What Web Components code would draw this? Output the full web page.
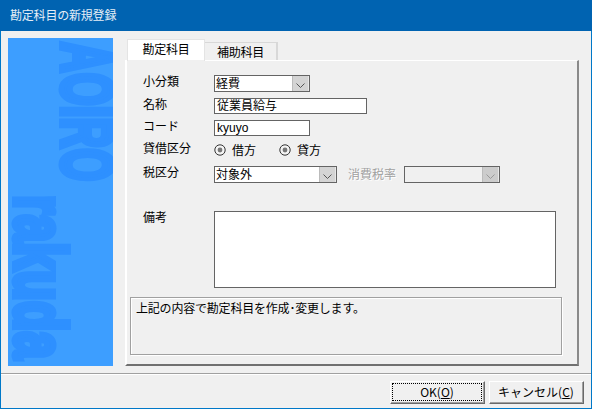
<!DOCTYPE html>
<html lang="ja">
<head>
<meta charset="utf-8">
<title>勘定科目の新規登録</title>
<style>
    html, body { margin: 0; padding: 0; background: #f0f0f0; }
    body { font: 12px/16px "Noto Sans CJK JP", sans-serif; color: #000; }
</style>
</head>
<body>
<app-window heading="勘定科目の新規登録">
    <side-banner slot="side"></side-banner>
    <tab-panel slot="main">
        <form-row label="小分類" style="margin-top:14px">
            <combo-box value="経費" style="width:96px"></combo-box>
        </form-row>
        <form-row label="名称" style="margin-top:6px">
            <text-box value="従業員給与" style="width:153px"></text-box>
        </form-row>
        <form-row label="コード" style="margin-top:6px">
            <text-box value="kyuyo" style="width:96px"></text-box>
        </form-row>
        <form-row label="貸借区分" style="margin-top:6px">
            <radio-opt label="借方" style="width:65px"></radio-opt>
            <radio-opt label="貸方"></radio-opt>
        </form-row>
        <form-row label="税区分" style="margin-top:9px">
            <combo-box value="対象外" style="width:123px"></combo-box>
            <span style="margin:0 8px 0 11px;color:#a0a0a0;text-shadow:1px 1px 0 #fff;line-height:14px;padding-bottom:2px">消費税率</span>
            <combo-box disabled style="width:96px"></combo-box>
        </form-row>
        <form-row label="備考" style="margin-top:28px">
            <text-box multiline style="width:342px;height:77px"></text-box>
        </form-row>
        <group-note style="margin:9px 0 0 0">上記の内容で勘定科目を作成･変更します。</group-note>
    </tab-panel>
    <push-button slot="actions" focused style="width:95px"><span>OK(<u>O</u>)</span></push-button>
    <push-button slot="actions" style="width:95px"><span>キャンセル(<u>C</u>)</span></push-button>
</app-window>

<script>
// ---- window frame: title bar, body, button bar ----
class AppWindow extends HTMLElement {
    constructor() {
        super();
        this.attachShadow({ mode: 'open' });
    }
    connectedCallback() {
        this.shadowRoot.innerHTML = `
            <style>
                :host { display: flex; flex-direction: column; width: 592px; height: 409px; box-sizing: border-box; border: 1px solid #0078c8; border-top: 0; background: #f0f0f0; }
                .title { height: 31px; margin: 0 -1px; padding-left: 10px; background: #0063b1; color: #e6eef6; line-height: 30px; flex: none; letter-spacing: -.2px; }
                .body { flex: 1; display: flex; padding: 7px 0 0 7px; gap: 12px; min-height: 0; }
                .bar { flex: none; height: 35px; border-top: 1px solid #a0a0a0; box-shadow: inset 0 1px 0 #fff; display: flex; justify-content: flex-end; gap: 4px; padding: 7px 7px 0 0; box-sizing: border-box; }
            </style>
            <div class="title">${this.getAttribute('heading')}</div>
            <div class="body"><slot name="side"></slot><slot name="main"></slot></div>
            <div class="bar"><slot name="actions"></slot></div>
        `;
    }
}
customElements.define('app-window', AppWindow);

// ---- blue strip with the rotated product name ----
class SideBanner extends HTMLElement {
    constructor() {
        super();
        this.attachShadow({ mode: 'open' });
        this.shadowRoot.innerHTML = `
            <style>
                :host { display: block; position: relative; width: 105px; height: 328px; background: #3d9eff; overflow: hidden; }
                span { position: absolute; writing-mode: vertical-rl; font: bold 72px/50px "Liberation Sans", sans-serif; color: #2e90ff; -webkit-text-stroke: 6px #2e90ff; transform-origin: top; white-space: nowrap; }
                .a { left: 54px; top: 4px; transform: scaleY(.59); }
                .b { left: 7px; top: 157px; transform: scaleY(.695); }
            </style>
            <span class="a">AOIRO</span>
            <span class="b">rakuda</span>
        `;
    }
}
customElements.define('side-banner', SideBanner);

// ---- tab strip plus raised panel ----
class TabPanel extends HTMLElement {
    constructor() {
        super();
        this.attachShadow({ mode: 'open' });
        this.shadowRoot.innerHTML = `
            <style>
                :host { display: block; width: 454px; margin-top: 1px; }
                .tabs { display: flex; align-items: flex-end; height: 21px; padding-left: 2px; position: relative; z-index: 1; }
                .tab { box-sizing: border-box; text-align: center; border: 1px solid #d8d8d8; border-bottom: 0; letter-spacing: -.2px; }
                .on { width: 78px; height: 22px; margin-bottom: -1px; background: linear-gradient(#fff, #fff 20px, #f0f0f0 20px); border-color: #e4e4e4; line-height: 17px; }
                .off { width: 73px; height: 18px; line-height: 18px; background: #f0f0f0; border-left: 0; border-width: 1px 2px 0 1px; }
                .panel { box-sizing: border-box; height: 306px; border-left: 2px solid #fff; border-top: 1px solid #fff; border-right: 2px solid #8a8a8a; border-bottom: 2px solid #707070; padding-left: 3px; }
            </style>
            <div class="tabs">
                <div class="tab on">勘定科目</div>
                <div class="tab off">補助科目</div>
            </div>
            <div class="panel"><slot></slot></div>
        `;
    }
}
customElements.define('tab-panel', TabPanel);

// ---- label + controls on one line ----
class FormRow extends HTMLElement {
    constructor() {
        super();
        this.attachShadow({ mode: 'open' });
    }
    connectedCallback() {
        this.shadowRoot.innerHTML = `
            <style>
                :host { display: flex; align-items: flex-start; padding-left: 13px; }
                .label { width: 71px; flex: none; margin-top: -2px; }
                .ctl { display: flex; align-items: center; }
            </style>
            <div class="label">${this.getAttribute('label')}</div>
            <div class="ctl"><slot></slot></div>
        `;
    }
}
customElements.define('form-row', FormRow);

class ComboBox extends HTMLElement {
    constructor() {
        super();
        this.attachShadow({ mode: 'open' });
    }
    connectedCallback() {
        const off = this.hasAttribute('disabled');
        this.shadowRoot.innerHTML = `
            <style>
                :host { display: flex; box-sizing: border-box; height: 17px; border: 1px solid #646464; background: ${off ? '#f0f0f0' : '#fff'}; line-height: 14px; }
                .v { flex: 1; padding-left: 1px; white-space: nowrap; }
                .btn { flex: none; width: 17px; background: ${off ? '#ccc' : '#d4d4d4'}; border-left: 1px solid #bbb; border-right: 1px solid #e8e8e8; box-sizing: border-box; display: flex; align-items: center; justify-content: center; padding-top: 3px; }
            </style>
            <div class="v">${this.getAttribute('value') || ''}</div>
            <div class="btn"><svg width="9" height="5" viewBox="0 0 9 5"><path d="M.5.5 4.5 4.5 8.5.5" fill="none" stroke="${off ? '#999' : '#555'}"/></svg></div>
        `;
    }
}
customElements.define('combo-box', ComboBox);

class TextBox extends HTMLElement {
    constructor() {
        super();
        this.attachShadow({ mode: 'open' });
    }
    connectedCallback() {
        this.shadowRoot.innerHTML = `
            <style>
                :host { display: block; box-sizing: border-box; height: 16px; border: 1px solid #646464; background: #fff; padding-left: 2px; line-height: 14px; font-family: "Liberation Sans", "Noto Sans CJK JP", sans-serif; white-space: nowrap; }
            </style>
            ${this.getAttribute('value') || ''}
        `;
    }
}
customElements.define('text-box', TextBox);

class RadioOpt extends HTMLElement {
    constructor() {
        super();
        this.attachShadow({ mode: 'open' });
    }
    connectedCallback() {
        this.shadowRoot.innerHTML = `
            <style>
                :host { display: flex; align-items: center; gap: 6px; height: 14px; box-sizing: border-box; margin-top: 1px; }
                svg { flex: none; }
            </style>
            <svg width="12" height="12" viewBox="0 0 12 12">
                <circle cx="6" cy="6" r="5.2" fill="#f4f4f4" stroke="#333"/>
                <circle cx="6" cy="6" r="2.4" fill="#777"/>
            </svg>
            <span>${this.getAttribute('label')}</span>
        `;
    }
}
customElements.define('radio-opt', RadioOpt);

class GroupNote extends HTMLElement {
    constructor() {
        super();
        this.attachShadow({ mode: 'open' });
        this.shadowRoot.innerHTML = `
            <style>
                :host { display: block; box-sizing: border-box; width: 432px; height: 58px; border: 1px solid #a0a0a0; box-shadow: inset 1px 1px 0 #fff, 1px 1px 0 #fff; padding: 2px 5px; letter-spacing: -.2px; }
            </style>
            <slot></slot>
        `;
    }
}
customElements.define('group-note', GroupNote);

class PushButton extends HTMLElement {
    constructor() {
        super();
        this.attachShadow({ mode: 'open' });
    }
    connectedCallback() {
        const focus = this.hasAttribute('focused');
        this.shadowRoot.innerHTML = `
            <style>
                :host { display: flex; box-sizing: border-box; height: 23px; background: #f0f0f0; border: 1px solid; border-color: #fff #696969 #696969 #fff; box-shadow: inset -1px -1px 0 #a0a0a0; padding: 1px 2px 2px 1px; }
                .in { flex: 1; display: flex; align-items: center; justify-content: center; border: 1px ${focus ? 'dotted #000' : 'solid transparent'}; }
            </style>
            <div class="in"><slot></slot></div>
        `;
    }
}
customElements.define('push-button', PushButton);
</script>
</body>
</html>
